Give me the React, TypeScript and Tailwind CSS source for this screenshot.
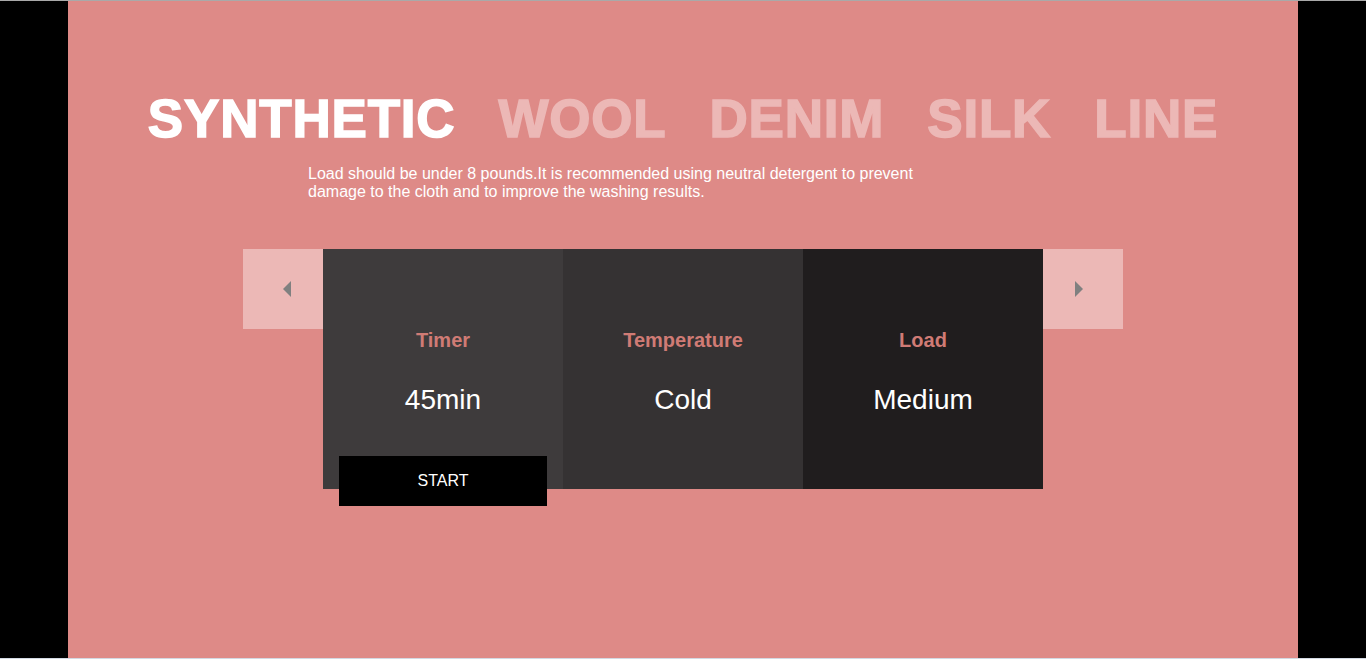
const tabs = ['SYNTHETIC', 'WOOL', 'DENIM', 'SILK', 'LINE'];

const settings = [
  { label: 'Timer', value: '45min', bg: 'bg-[#3e3b3c]', start: true },
  { label: 'Temperature', value: 'Cold', bg: 'bg-[#353233]', start: false },
  { label: 'Load', value: 'Medium', bg: 'bg-[#201d1e]', start: false },
];

const Arrow = ({ dir }: { dir: 'left' | 'right' }) => (
  <button className="w-[80px] h-[80px] bg-[#ecb8b6] flex items-center justify-center">
    <svg width="16" height="16" viewBox="0 0 16 16">
      {dir === 'left' ? (
        <polygon points="16,0 8,8 16,16" fill="#808080" />
      ) : (
        <polygon points="0,0 8,8 0,16" fill="#808080" />
      )}
    </svg>
  </button>
);

export default function App() {
  return (
    <div className="w-[1366px] h-[659px] flex flex-col bg-black font-['Liberation_Sans',Arial,sans-serif] overflow-hidden">
      <div className="h-px bg-[#a9a9a9]" />
      <div className="flex flex-1">
        <div className="w-[68px]" />
        <main className="w-[1230px] bg-[#de8a87] flex flex-col pt-[91px]">
          <nav className="flex justify-center gap-[43px]">
            {tabs.map((t, i) => (
              <span
                key={t}
                className={
                  'text-[53px] leading-none font-bold tracking-[0.8px] [-webkit-text-stroke:1.5px_currentColor] ' +
                  (i === 0 ? 'text-white' : 'text-[#ecb8b6]')
                }
              >
                {t}
              </span>
            ))}
          </nav>

          <p className="ml-[240px] mt-[20px] w-[640px] text-white text-[16px] leading-[18px]">
            Load should be under 8 pounds.It is recommended using neutral detergent to prevent
            damage to the cloth and to improve the washing results.
          </p>

          <div className="mt-[48px] flex justify-center items-start">
            <Arrow dir="left" />
            {settings.map((s) => (
              <div
                key={s.label}
                className={'w-[240px] h-[240px] flex flex-col items-center px-4 pt-[80px] ' + s.bg}
              >
                <span className="text-[20px] leading-[23px] font-bold text-[#d07b75]">{s.label}</span>
                <span className="mt-[32px] text-[28px] leading-[32px] text-white">{s.value}</span>
                {s.start && (
                  <button className="mt-[40px] w-full h-[50px] shrink-0 bg-black text-white text-[16px]">
                    START
                  </button>
                )}
              </div>
            ))}
            <Arrow dir="right" />
          </div>
        </main>
        <div className="w-[68px]" />
      </div>
      <div className="h-px bg-[#d3d9e3]" />
    </div>
  );
}
